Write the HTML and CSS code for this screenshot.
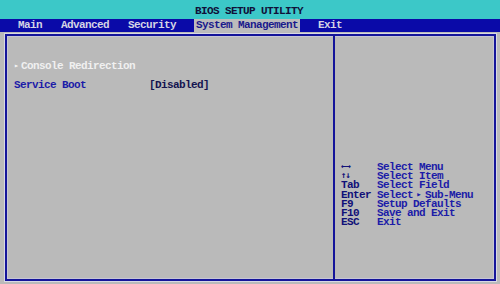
FILE: index.html
```html
<!DOCTYPE html>
<html lang="en">
<head>
    <meta charset="UTF-8">
    <title>BIOS Setup Utility</title>
    <link rel="stylesheet" href="styles.css">
</head>
<body>
    <div class="title">BIOS SETUP UTILITY</div>

    <div class="menu">
        <span class="tab">Main</span>
        <span class="tab">Advanced</span>
        <span class="tab">Security</span>
        <span class="tab active">System Management</span>
        <span class="tab">Exit</span>
    </div>

    <div class="frame">
        <div class="options">
            <div class="row submenu"><span class="arrow">&#9656;</span>Console Redirection</div>
            <div class="row">
                <span class="label">Service Boot</span>
                <span class="value">[Disabled]</span>
            </div>
        </div>

        <div class="help">
            <div class="keys">
                <span class="key"><span class="glyph">&larr;&rarr;</span></span><span>Select Menu</span>
                <span class="key"><span class="glyph">&uarr;&darr;</span></span><span>Select Item</span>
                <span class="key">Tab</span><span>Select Field</span>
                <span class="key">Enter</span><span>Select<span class="tri">&#9656;</span>Sub-Menu</span>
                <span class="key">F9</span><span>Setup Defaults</span>
                <span class="key">F10</span><span>Save and Exit</span>
                <span class="key">ESC</span><span>Exit</span>
            </div>
        </div>
    </div>
</body>
</html>
```

FILE: styles.css
```css
/* Classic blue/grey BIOS screen */
body {
    margin: 0;
    width: 500px;
    height: 284px;
    background: #bababa;
    font-family: 'Liberation Mono', 'DejaVu Sans Mono', monospace;
    font-size: 11px;
    letter-spacing: -0.6px;
    font-weight: 700;
    overflow: hidden;
}

/* Top title bar */
.title {
    height: 19px;
    line-height: 22px;
    background: #3cc8c8;
    color: #101038;
    text-align: center;
    padding-right: 2px;
}

/* Menu bar */
.menu {
    height: 13px;
    line-height: 13px;
    background: #0a0aa8;
    color: #d4d4e4;
    display: flex;
    gap: 17px;
    padding-left: 17px;
}

.tab {
    padding: 0 1px;
}

.tab.active {
    background: #bcbcbc;
    color: #1a1a8c;
    padding: 0 2px;
}

/* Main frame with the two panels */
.frame {
    margin: 2px 4px 0 5px;
    height: 243px;
    border: 2px solid #14149a;
    box-shadow: 0 0 0 1px #d8d8e4, inset 0 0 0 1px #c6c6d6;
    display: grid;
    grid-template-columns: 328px 1fr;
}

.options {
    border-right: 2px solid #14149a;
    padding: 25px 0 0 7px;
    display: flex;
    flex-direction: column;
    gap: 9px;
}

.row {
    display: flex;
    line-height: 10px;
}

.submenu {
    color: #f0f0f0;
}

.arrow {
    font-size: 8px;
    width: 7px;
    color: #f4f4f4;
}

.label {
    width: 135px;
    color: #1c1ca8;
}

.value {
    color: #141450;
}

/* Key help */
.help {
    padding: 127px 0 0 6px;
}

.keys {
    display: grid;
    grid-template-columns: 36px 1fr;
    grid-auto-rows: 9.2px;
    line-height: 9.2px;
    color: #1c1ca8;
}

.key {
    color: #101078;
}

.glyph {
    font-family: 'DejaVu Sans Mono', monospace;
    font-size: 9px;
    line-height: 0;
    letter-spacing: -1px;
    vertical-align: 1px;
}

.tri {
    display: inline-block;
    width: 12px;
    text-align: center;
    font-family: 'DejaVu Sans Mono', monospace;
    font-size: 9px;
    line-height: 0;
    letter-spacing: 0;
    vertical-align: 1px;
}
```
